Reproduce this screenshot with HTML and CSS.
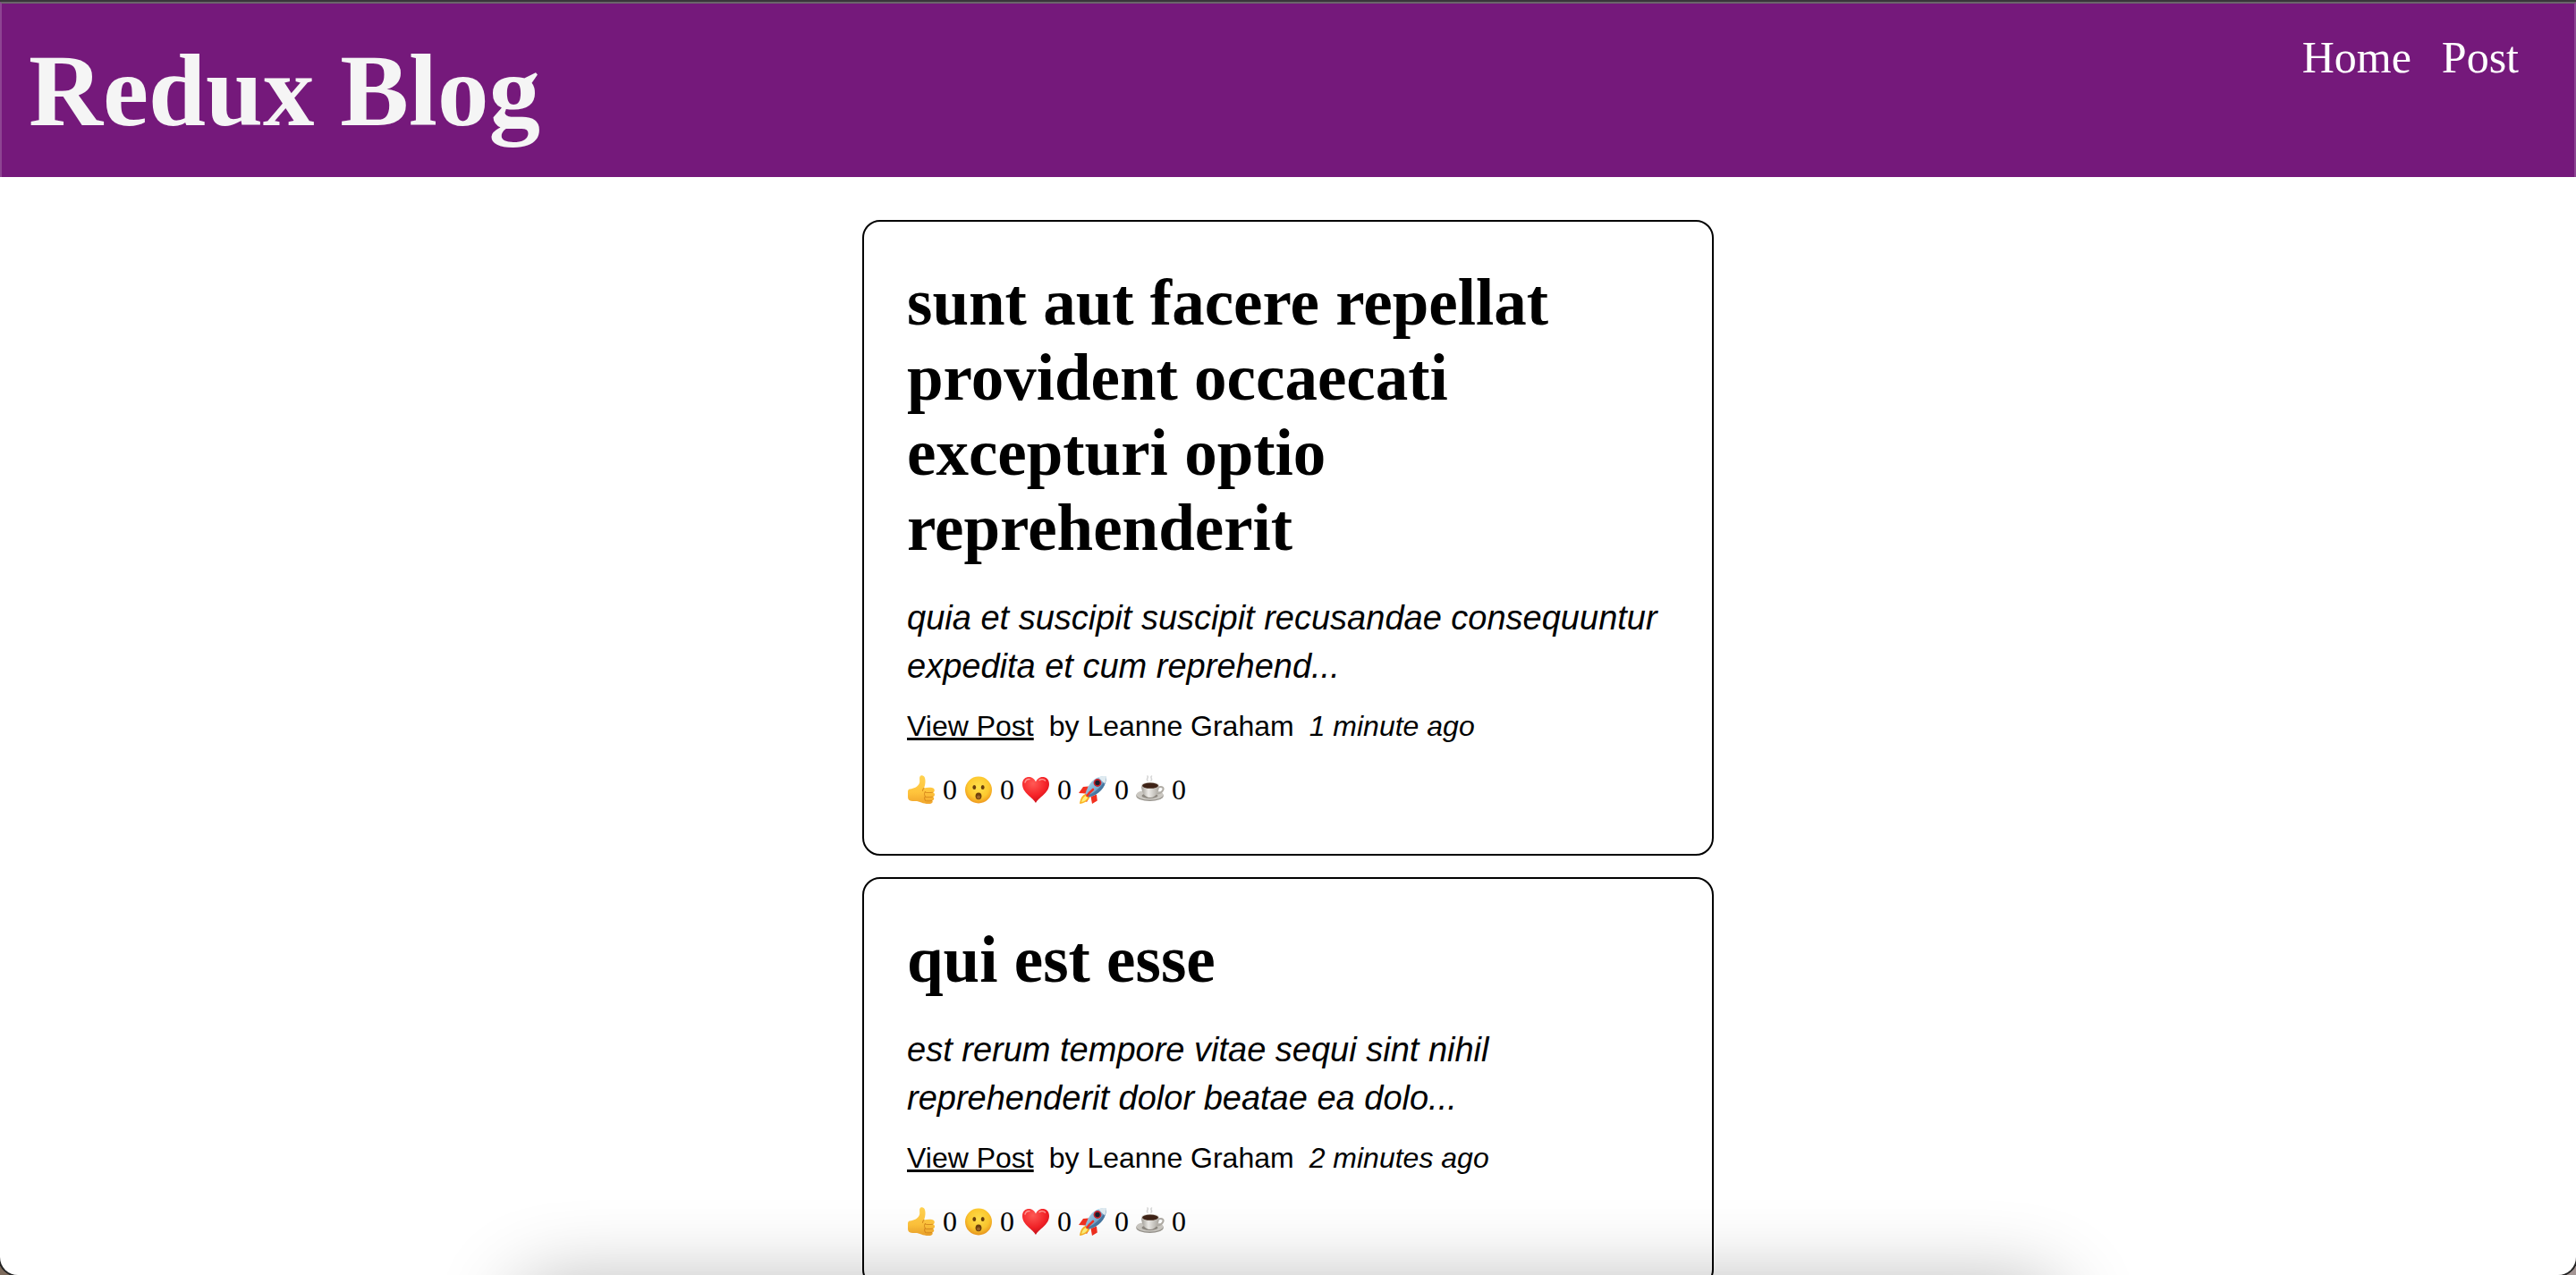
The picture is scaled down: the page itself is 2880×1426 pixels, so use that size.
FILE: index.html
```html
<!DOCTYPE html>
<html lang="en">
<head>
<meta charset="utf-8">
<title>Redux Blog</title>
<link rel="stylesheet" href="styles.css">
</head>
<body>
<svg class="sprite" aria-hidden="true">
  <defs>
    <linearGradient id="skin" x1="0" y1="0" x2="0" y2="1"><stop offset="0" stop-color="#ffd250"/><stop offset=".6" stop-color="#ffc43c"/><stop offset="1" stop-color="#f0a52c"/></linearGradient>
    <radialGradient id="face" cx=".5" cy=".4" r=".6"><stop offset="0" stop-color="#ffe14d"/><stop offset=".65" stop-color="#fdc92f"/><stop offset="1" stop-color="#ee981f"/></radialGradient>
    <radialGradient id="red" cx=".4" cy=".25" r=".8"><stop offset="0" stop-color="#ff5a55"/><stop offset=".6" stop-color="#f52227"/><stop offset="1" stop-color="#c40d19"/></radialGradient>
    <linearGradient id="hull" x1="0" y1="0" x2="1" y2="1"><stop offset="0" stop-color="#c4e0f0"/><stop offset=".5" stop-color="#7fb2d6"/><stop offset="1" stop-color="#3f6f98"/></linearGradient>
    <linearGradient id="china" x1="0" y1="0" x2="1" y2="0"><stop offset="0" stop-color="#a19d96"/><stop offset=".4" stop-color="#efede9"/><stop offset="1" stop-color="#a9a59e"/></linearGradient>
  </defs>
  <symbol id="thumb" viewBox="0 0 32 32">
    <path fill="url(#skin)" d="M1 18.500C1 16 2.500 15.500 5 15.200 9 14.500 13 12 14 8.500c.6-2.500-.5-5 .5-7C15.500-.3 19-.3 20 3c1 3.500.5 7.500-1 11.500 2.500-.7 6-.9 9-.5 3.500.5 3.500 4.700 1 5.200 2.700.6 2.600 4.500.2 5 1.700.9 1.300 3.800-.9 4.200 1 1.300.2 3.400-2.300 3.500-4 .3-7-.2-10-1.400-2-.8-4-1.500-7-1.500C3 29 1 28 1 24z"/>
    <path fill="none" stroke="#dc9020" stroke-width="1.100" stroke-linecap="round" d="M19 14.500c-1 .8-1.600 2-1.500 3M21 19.200c2.500.5 5 .4 7.500 0M20.500 24.200c3 .5 5.500.4 8 0M20.500 28.500c2 .5 4.500.5 7 0M20.500 18.500c-1.500 1.500-1 4 0 5.200-1.200 1.300-1 3.300 0 4.500"/>
  </symbol>
  <symbol id="wow" viewBox="0 0 32 32">
    <circle cx="16" cy="16.500" r="15" fill="url(#face)"/>
    <ellipse cx="11.300" cy="13.500" rx="1.900" ry="2.500" fill="#6b3f0c"/>
    <ellipse cx="20.700" cy="13.500" rx="1.900" ry="2.500" fill="#6b3f0c"/>
    <ellipse cx="16" cy="23.300" rx="3.400" ry="3.900" fill="#6e400d"/>
    <ellipse cx="16" cy="24.600" rx="2" ry="2" fill="#9a6429"/>
  </symbol>
  <symbol id="heart" viewBox="0 0 32 32">
    <path fill="url(#red)" d="M16 31C13 25 1 20 1 10 1 4.500 4.500 2 8.500 2 12 2 15 4.500 16 7.500 17 4.500 20 2 23.500 2 27.500 2 31 4.500 31 10c0 10-12 15-15 21z"/>
    <path fill="none" stroke="#ff9a94" stroke-width="1.400" stroke-linecap="round" d="M4 8c.8-2.500 3-3.600 5-3.400M20 5.600c2-1.400 5-1 6.500.4"/>
  </symbol>
  <symbol id="rocket" viewBox="0 0 32 32">
    <path fill="#f2301f" d="M11 12.500 5 13 0 20l9 .5zM20 21.500l.8 7L15 32l-1.500-8zM8 19.500l4.500 4.500-3.500 6-4-3z"/>
    <path fill="#fbb323" d="M8 21l4 4C10.500 29 6 31.500 1 32c.5-5 3-10.500 7-11z"/>
    <path fill="#fff07b" d="M8 23l2 2C8.500 28 6 29.500 3 30c.5-3 2.500-6 5-7z"/>
    <path fill="url(#hull)" d="M31 1C22 .5 13 5 8.500 17.500l-1 3 4 4L15 23.500C26 19 31 11 31 1z"/>
    <path fill="#2a5a86" opacity=".55" d="M31 1C31 11 26 19 15 23.500l-3.500 1-2-2C18 20 27 12 31 1z"/>
    <path fill="#dfeaf0" d="M31 1c-3.500-.2-6.500.2-9 1.300L29 9.500c1.200-2.300 2-5.500 2-8.500z"/>
    <circle cx="21" cy="8.500" r="4.400" fill="#c9202a"/>
    <circle cx="21" cy="8.500" r="2.700" fill="#1c1d2c"/>
    <path fill="none" stroke="#f03325" stroke-width="2.600" stroke-linecap="round" d="M16 16c-3 2.500-5 4.500-6.500 7"/>
  </symbol>
  <symbol id="coffee" viewBox="0 0 32 32">
    <path fill="none" stroke="#d6d6d6" stroke-width="1.600" stroke-linecap="round" d="M13 6c-2-2 1.500-3 0-5M17 6c2-2-1.500-3 .5-5"/>
    <ellipse cx="15.500" cy="23" rx="15.300" ry="6" fill="#99958e"/>
    <ellipse cx="15.500" cy="22" rx="15" ry="5.500" fill="#cbc8c2"/>
    <ellipse cx="15.500" cy="23" rx="9" ry="3" fill="#8d8880"/>
    <path fill="none" stroke="#b0aca5" stroke-width="2" d="M25 13.500c5-1.500 6.500 1 5 3.500-1 2-4 3.500-7 3.500"/>
    <path fill="url(#china)" d="M6 11.500h20c0 6-3 13.500-10 13.500S6 18 6 11.500z"/>
    <ellipse cx="16" cy="11.500" rx="10" ry="3.800" fill="#dcd9d3"/>
    <ellipse cx="16" cy="11.700" rx="9" ry="3.100" fill="#3f2417"/>
  </symbol>
</svg>
<div class="window">
  <header class="header">
    <h1 class="brand">Redux Blog</h1>
    <nav class="nav">
      <a href="#">Home</a>
      <a href="#">Post</a>
    </nav>
  </header>
  <main class="posts">
    <article class="post">
      <h2 class="title">sunt aut facere repellat provident occaecati excepturi optio reprehenderit</h2>
      <p class="excerpt">quia et suscipit suscipit recusandae consequuntur expedita et cum reprehend...</p>
      <p class="credit"><a href="#">View Post</a> <span>by Leanne Graham</span> <time>1 minute ago</time></p>
      <div class="reactions">
        <button type="button" aria-label="Thumbs up"><svg><use href="#thumb"/></svg>0</button>
        <button type="button" aria-label="Wow"><svg><use href="#wow"/></svg>0</button>
        <button type="button" aria-label="Heart"><svg><use href="#heart"/></svg>0</button>
        <button type="button" aria-label="Rocket"><svg><use href="#rocket"/></svg>0</button>
        <button type="button" aria-label="Coffee"><svg><use href="#coffee"/></svg>0</button>
      </div>
    </article>
    <article class="post">
      <h2 class="title">qui est esse</h2>
      <p class="excerpt">est rerum tempore vitae sequi sint nihil reprehenderit dolor beatae ea dolo...</p>
      <p class="credit"><a href="#">View Post</a> <span>by Leanne Graham</span> <time>2 minutes ago</time></p>
      <div class="reactions">
        <button type="button" aria-label="Thumbs up"><svg><use href="#thumb"/></svg>0</button>
        <button type="button" aria-label="Wow"><svg><use href="#wow"/></svg>0</button>
        <button type="button" aria-label="Heart"><svg><use href="#heart"/></svg>0</button>
        <button type="button" aria-label="Rocket"><svg><use href="#rocket"/></svg>0</button>
        <button type="button" aria-label="Coffee"><svg><use href="#coffee"/></svg>0</button>
      </div>
    </article>
  </main>
  <div class="dock-shadow"></div>
</div>
</body>
</html>
```
FILE: styles.css
```css
* {
  box-sizing: border-box;
  margin: 0;
}

body {
  background: linear-gradient(90deg, #7d6b5c, #a39594);
  color: #000;
  font-family: Baskerville, "Liberation Serif", serif;
  font-size: 32px;
}

.sprite {
  position: absolute;
  width: 0;
  height: 0;
}

.window {
  position: relative;
  height: 100vh;
  overflow: hidden;
  background: #fff;
  border-top: 2px solid #39353a;
  border-radius: 0 0 20px 20px;
  box-shadow: 0 0 0 2px #222;
}

.header {
  display: flex;
  justify-content: space-between;
  align-items: flex-start;
  padding: 32px 62px 30px 30px;
  background: #75197b;
  border: 2px solid #8d4492;
  border-top-color: #6a656a;
  border-bottom: 0;
}

.brand {
  color: #f5f5f5;
  font-size: 115px;
  line-height: 132px;
}

.nav {
  display: flex;
  gap: 34px;
}

.nav a {
  color: #fff;
  font-size: 50px;
  line-height: 56px;
  text-decoration: none;
}

.posts {
  display: flex;
  flex-direction: column;
  gap: 24px;
  max-width: 1048px;
  margin: 0 auto;
  padding: 48px;
}

.post {
  padding: 49px 48px 50px;
  border: 2px solid #000;
  border-radius: 20px;
}

.title {
  margin-bottom: 31px;
  font-size: 73px;
  line-height: 84px;
}

.excerpt {
  margin-bottom: 18px;
  font: italic 38px/54px Arial, "Liberation Sans", sans-serif;
}

.credit {
  display: flex;
  gap: 17px;
  margin-bottom: 27px;
  font-family: Arial, "Liberation Sans", sans-serif;
  line-height: 44px;
}

.credit a {
  color: #000;
}

.credit time {
  font-style: italic;
}

.reactions {
  display: flex;
  gap: 8px;
}

.reactions button {
  display: flex;
  align-items: center;
  gap: 8px;
  padding: 0;
  border: 0;
  background: none;
  color: #000;
  font: inherit;
  line-height: 44px;
}

.reactions svg {
  width: 32px;
  height: 32px;
}

/* Soft shade along the lower edge of the window */
.dock-shadow {
  position: absolute;
  right: 20%;
  bottom: -100px;
  left: 20%;
  height: 90px;
  border-radius: 40px;
  box-shadow: 0 0 90px rgba(0, 0, 0, 0.3);
  pointer-events: none;
}
```
